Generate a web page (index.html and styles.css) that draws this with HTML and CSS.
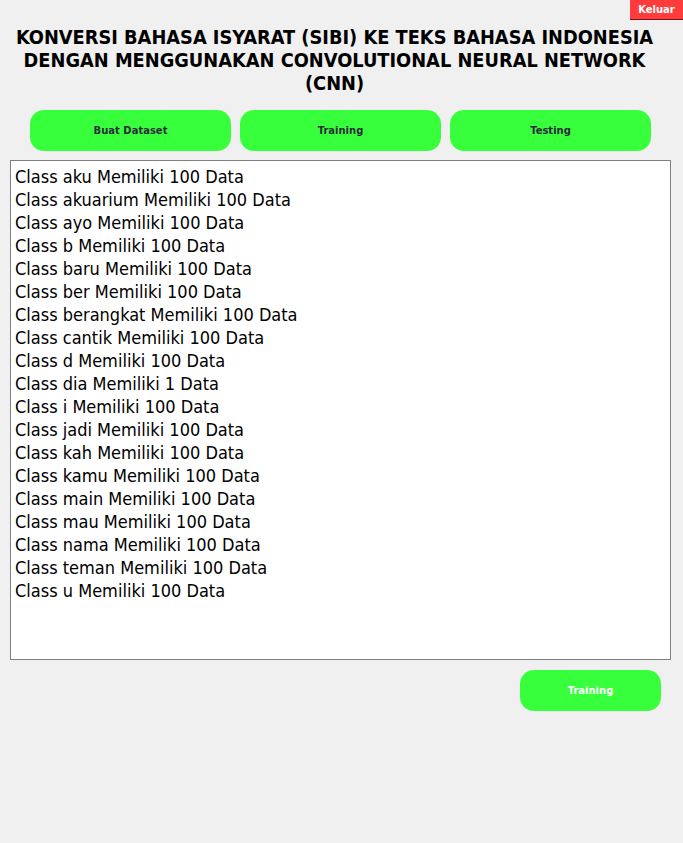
FILE: index.html
```html
<!DOCTYPE html>
<html>
<head>
<meta charset="utf-8">
<link rel="stylesheet" href="styles.css">
</head>
<body>
<div class="app">
  <div class="topbar"><button class="keluar">Keluar</button></div>
  <h1 class="title">KONVERSI BAHASA ISYARAT (SIBI) KE TEKS BAHASA INDONESIA<br>DENGAN MENGGUNAKAN CONVOLUTIONAL NEURAL NETWORK<br>(CNN)</h1>
  <div class="menu">
    <button class="btn">Buat Dataset</button>
    <button class="btn">Training</button>
    <button class="btn">Testing</button>
  </div>
  <div class="output">
    <div>Class aku Memiliki 100 Data</div>
    <div>Class akuarium Memiliki 100 Data</div>
    <div>Class ayo Memiliki 100 Data</div>
    <div>Class b Memiliki 100 Data</div>
    <div>Class baru Memiliki 100 Data</div>
    <div>Class ber Memiliki 100 Data</div>
    <div>Class berangkat Memiliki 100 Data</div>
    <div>Class cantik Memiliki 100 Data</div>
    <div>Class d Memiliki 100 Data</div>
    <div>Class dia Memiliki 1 Data</div>
    <div>Class i Memiliki 100 Data</div>
    <div>Class jadi Memiliki 100 Data</div>
    <div>Class kah Memiliki 100 Data</div>
    <div>Class kamu Memiliki 100 Data</div>
    <div>Class main Memiliki 100 Data</div>
    <div>Class mau Memiliki 100 Data</div>
    <div>Class nama Memiliki 100 Data</div>
    <div>Class teman Memiliki 100 Data</div>
    <div>Class u Memiliki 100 Data</div>
  </div>
  <div class="actions"><button class="btn btn-white">Training</button></div>
</div>
</body>
</html>
```
FILE: styles.css
```css
html, body {
  margin: 0;
  padding: 0;
  background: #f0f0f0;
}
.app {
  width: 683px;
  height: 843px;
  font-family: "DejaVu Sans", sans-serif;
}
.topbar {
  display: flex;
  justify-content: flex-end;
  height: 20px;
}
.keluar {
  width: 53px;
  height: 20px;
  border: none;
  border-bottom: 1px solid #7a1010;
  background: #ff3b3b;
  color: #fff;
  font-family: "DejaVu Sans", sans-serif;
  font-weight: bold;
  font-size: 10px;
  padding: 0;
}
.title {
  margin: 6px 0 0 0;
  padding-right: 14px;
  text-align: center;
  font-family: "DejaVu Sans Condensed", "DejaVu Sans", sans-serif;
  font-weight: bold;
  font-size: 19.8px;
  line-height: 23px;
  color: #000;
}
.menu {
  display: flex;
  gap: 9px;
  padding: 15px 0 0 30px;
}
.btn {
  width: 201px;
  height: 41px;
  border: none;
  border-radius: 14px;
  background: #38ff3c;
  color: #2b2b3b;
  font-family: "DejaVu Sans", sans-serif;
  font-weight: bold;
  font-size: 10px;
  padding: 0;
}
.output {
  margin: 9px 0 0 10px;
  width: 655px;
  height: 489px;
  border: 1px solid #808080;
  background: #fff;
  padding: 4px 0 5px 4px;
  font-family: "DejaVu Sans Condensed", "DejaVu Sans", sans-serif;
  font-size: 18px;
  line-height: 23px;
  color: #000;
}
.actions {
  display: flex;
  justify-content: flex-end;
  padding: 10px 22px 0 0;
}
.btn-white {
  width: 141px;
  color: #fff;
}
```
